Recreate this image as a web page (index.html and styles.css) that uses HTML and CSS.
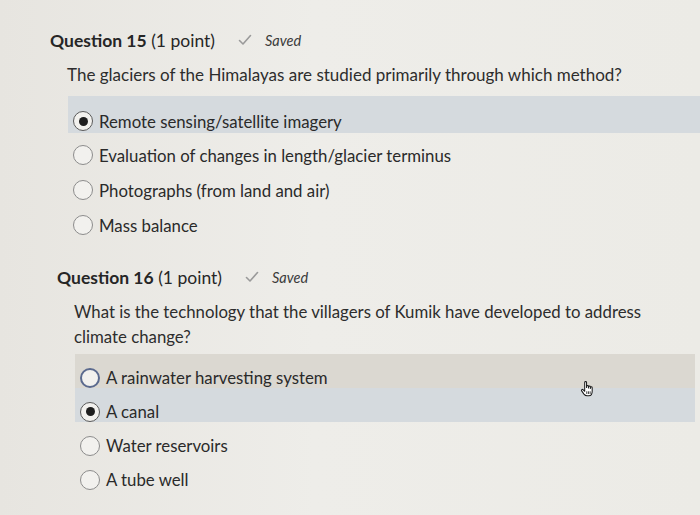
FILE: index.html
```html
<!DOCTYPE html>
<html>
<head>
<meta charset="utf-8">
<link rel="stylesheet" href="styles.css">
</head>
<body>
<div class="page">
  <section class="question q15">
    <div class="q-head">
      <span class="q-title"><b>Question 15</b> (1 point)</span>
      <span class="saved">
        <svg class="check" viewBox="0 0 14 12" width="14" height="12"><path d="M1.5 6.5 L5 10 L12.5 1.5" fill="none" stroke="#9a9a9a" stroke-width="1.6" stroke-linecap="round" stroke-linejoin="round"/></svg>
        <i>Saved</i>
      </span>
    </div>
    <p class="q-text">The glaciers of the Himalayas are studied primarily through which method?</p>
    <ul class="options">
      <li class="opt selected"><span class="radio checked"></span>Remote sensing/satellite imagery</li>
      <li class="opt"><span class="radio"></span>Evaluation of changes in length/glacier terminus</li>
      <li class="opt"><span class="radio"></span>Photographs (from land and air)</li>
      <li class="opt"><span class="radio"></span>Mass balance</li>
    </ul>
  </section>
  <section class="question q16">
    <div class="q-head">
      <span class="q-title"><b>Question 16</b> (1 point)</span>
      <span class="saved">
        <svg class="check" viewBox="0 0 14 12" width="14" height="12"><path d="M1.5 6.5 L5 10 L12.5 1.5" fill="none" stroke="#9a9a9a" stroke-width="1.6" stroke-linecap="round" stroke-linejoin="round"/></svg>
        <i>Saved</i>
      </span>
    </div>
    <p class="q-text">What is the technology that the villagers of Kumik have developed to address climate change?</p>
    <ul class="options">
      <li class="opt hover"><span class="radio focus"></span>A rainwater harvesting system
        <svg class="cursor" viewBox="0 0 16 18" width="15" height="17"><path d="M5 10 V2.5 A1 1 0 0 1 7 2.5 V8 V6.8 A1 1 0 0 1 9 6.8 V8.5 V7.3 A1 1 0 0 1 11 7.3 V9 V8.2 A1 1 0 0 1 13 8.2 V12 C13 15 11.5 16.8 9.5 16.8 H7.5 C6 16.8 5 16 4.2 15 L1.6 11.3 A1 1 0 0 1 3.2 10.2 L5 12 Z" fill="#fff" stroke="#1a1a1a" stroke-width="1.1" stroke-linejoin="round"/><path d="M7.2 12 V14.8 M9 12 V14.8 M10.8 12 V14.8" stroke="#1a1a1a" stroke-width="0.9"/></svg>
      </li>
      <li class="opt selected"><span class="radio checked"></span>A canal</li>
      <li class="opt"><span class="radio"></span>Water reservoirs</li>
      <li class="opt"><span class="radio"></span>A tube well</li>
    </ul>
  </section>
</div>
</body>
</html>
```

FILE: styles.css
```css
* { box-sizing: border-box; }
html, body {
  margin: 0;
  padding: 0;
  width: 700px;
  height: 515px;
  overflow: hidden;
}
body {
  background: linear-gradient(90deg, #e7e5e0 0%, #eeede9 45%, #ecebe6 100%);
  font-family: Lato, "Open Sans", sans-serif;
  color: #2b2b2b;
}
.page {
  padding-top: 28px;
}
.question.q15 { margin-left: 50px; }
.question.q16 { margin-left: 57px; margin-right: 5px; margin-top: 29px; }
.q-head {
  display: flex;
  align-items: center;
  height: 24px;
  font-size: 17.5px;
  color: #262626;
}
.q-title b { font-weight: 700; }
.saved {
  display: inline-flex;
  align-items: center;
  margin-left: 23px;
  font-size: 14.5px;
  color: #3a3a3a;
}
.check { margin-right: 13px; }
.q-text {
  margin: 10px 0 0 17px;
  font-size: 17px;
  line-height: 26px;
  color: #2d2d2d;
  max-width: 590px;
}
.q16 .q-text { font-size: 16.8px; line-height: 25px; }
.options {
  list-style: none;
  margin: 8px 0 0 18px;
  padding: 0;
}
.q16 .options { margin-top: 5px; margin-left: 18px; }
.opt {
  position: relative;
  display: flex;
  align-items: center;
  height: 35px;
  padding: 13px 0 0 5px;
  font-size: 16.8px;
  color: #2a2a2a;
}
.q15 .opt.selected { height: 37px; margin-bottom: -2px; }
.q16 .opt { height: 34px; }
.opt.selected { background: #d5dade; }
.opt.hover { background: #dbd8d1; }
.radio {
  flex: none;
  width: 20px;
  height: 20px;
  border-radius: 50%;
  border: 1.5px solid #8c8c8c;
  background: #f2f1ee;
  margin-right: 6px;
  display: inline-flex;
  align-items: center;
  justify-content: center;
}
.radio.checked { border-color: #5a5a5a; }
.radio.checked::after {
  content: "";
  width: 9px;
  height: 9px;
  border-radius: 50%;
  background: #1e1e1e;
}
.radio.focus { border: 2px solid #5b6a8e; }
.cursor {
  position: absolute;
  z-index: 5;
  left: 505px;
  top: 26px;
}
```
